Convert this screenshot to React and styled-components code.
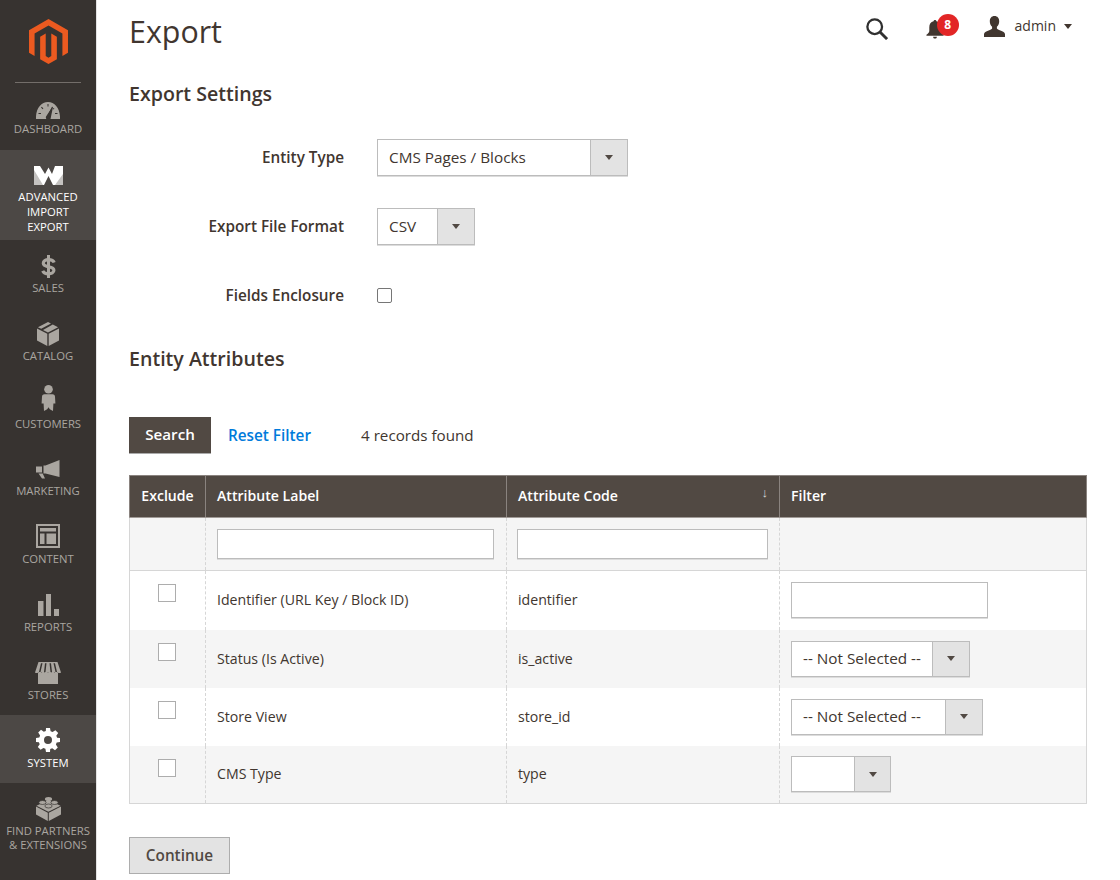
import React from "react";
import styled, { createGlobalStyle } from "styled-components";

const Global = createGlobalStyle`
  html, body { margin: 0; padding: 0; background: #fff; overflow: hidden; }
  body { font-family: "Open Sans", "Liberation Sans", sans-serif; color: #41362f; font-size: 14px; }
  * { box-sizing: border-box; }
`;

const Page = styled.div`
  display: flex;
  width: 1120px;
  height: 880px;
  overflow: hidden;
`;
const Sidebar = styled.nav`
  width: 97px;
  flex: none;
  height: 880px;
  background: #373330;
  border-right: 1px solid #e3e3e3;
  display: flex;
  flex-direction: column;
  overflow: hidden;
`;
const LogoBox = styled.div`
  height: 83px;
  margin: 0 15px;
  padding-top: 19px;
  border-bottom: 1px solid #736e6a;
  display: flex;
  justify-content: center;
  align-items: flex-start;
`;
const NavItem = styled.a`
  height: ${(p) => p.$h}px;
  flex: none;
  background: ${(p) => (p.$active ? "#4c4845" : "transparent")};
  color: ${(p) => (p.$active ? "#fff" : "#aaa6a0")};
  display: flex;
  flex-direction: column;
  align-items: center;
  padding-top: ${(p) => p.$pt}px;
  font-size: 11.3px;
  line-height: ${(p) => p.$lh || 14}px;
  text-align: center;
  text-transform: uppercase;
  white-space: nowrap;
`;
const NavIcon = styled.div`
  height: 24px;
  width: 40px;
  margin-bottom: ${(p) => p.$mb}px;
  display: flex;
  align-items: center;
  justify-content: center;
  color: ${(p) => (p.$active ? "#fff" : "#aaa6a0")};
`;
const Main = styled.main`
  flex: 1;
  min-width: 0;
  padding: 0 33px 0 32px;
`;
const Header = styled.header`
  height: 80px;
  display: flex;
  justify-content: space-between;
  align-items: flex-start;
`;
const Title = styled.h1`
  margin: 0;
  font-size: 30.4px;
  line-height: 64px;
  font-weight: 400;
  color: #41362f;
`;
const Actions = styled.div`
  display: flex;
  align-items: flex-start;
  margin-right: 15px;
  margin-top: 16px;
`;
const SearchWrap = styled.div`
  width: 22px;
  height: 22px;
  margin-top: 2px;
`;
const BellWrap = styled.div`
  position: relative;
  width: 18px;
  height: 19px;
  margin-left: 38px;
  margin-right: 40px;
  margin-top: 4px;
  color: #41362f;
`;
const Badge = styled.span`
  position: absolute;
  left: 11px;
  top: -6px;
  width: 22px;
  height: 22px;
  border-radius: 50%;
  background: #e22626;
  color: #fff;
  font-size: 12px;
  font-weight: 700;
  line-height: 22px;
  text-align: center;
`;
const UserName = styled.span`
  margin-left: 10px;
  font-size: 14px;
  line-height: 20px;
  color: #41362f;
`;
const UserCaret = styled.span`
  width: 0;
  height: 0;
  margin-left: 8px;
  margin-top: 8px;
  border-left: 4.5px solid transparent;
  border-right: 4.5px solid transparent;
  border-top: 5px solid #41362f;
`;
const SectionTitle = styled.h2`
  margin: 0;
  font-size: 19.6px;
  line-height: 28px;
  font-weight: 600;
  color: #41362f;
`;
const Form = styled.div`
  display: flex;
  flex-direction: column;
  margin-top: 31px;
  gap: 32px;
`;
const FormRow = styled.div`
  display: flex;
  align-items: center;
  height: 37px;
`;
const FormLabel = styled.label`
  width: 215px;
  margin-right: 33px;
  padding-bottom: 2px;
  text-align: right;
  font-size: 15.3px;
  font-weight: 600;
  color: #41362f;
`;
const SelectBox = styled.div`
  display: flex;
  width: ${(p) => p.$w}px;
  height: ${(p) => p.$h}px;
  background: #fff;
  border: 1px solid #bcbcbc;
  box-shadow: 0 1px 0 #dcdcdc;
  font-size: 15.3px;
  color: #41362f;
`;
const SelectValue = styled.div`
  flex: 1;
  min-width: 0;
  padding: 0 0 2px 11px;
  display: flex;
  align-items: center;
  white-space: nowrap;
  color: #41362f;
`;
const SelectArrow = styled.div`
  flex: none;
  width: ${(p) => p.$w}px;
  background: #e3e3e3;
  border-left: 1px solid #bcbcbc;
  display: flex;
  align-items: center;
  justify-content: center;
  &::after {
    content: "";
    width: 0;
    height: 0;
    border-left: 4.5px solid transparent;
    border-right: 4.5px solid transparent;
    border-top: 5px solid #514943;
  }
`;
const Checkbox = styled.span`
  display: block;
  width: ${(p) => p.$s}px;
  height: ${(p) => p.$s}px;
  background: #fff;
  border: 1px solid ${(p) => (p.$dark ? "#767676" : "#adadad")};
  border-radius: ${(p) => p.$r}px;
`;
const AttrTitle = styled(SectionTitle)`
  margin-top: 31px;
`;
const Toolbar = styled.div`
  display: flex;
  align-items: center;
  margin-top: 44px;
  height: 37px;
`;
const SearchButton = styled.button`
  width: 82px;
  height: 37px;
  padding: 0 0 2px;
  border: none;
  border-bottom: 1px solid #aaa;
  background: #514943;
  color: #fff;
  font-family: inherit;
  font-size: 15.2px;
  font-weight: 600;
`;
const ResetLink = styled.a`
  margin-left: 17px;
  padding-bottom: 2px;
  color: #007bdb;
  font-size: 15.3px;
  font-weight: 600;
`;
const Records = styled.span`
  margin-left: 50px;
  padding-bottom: 2px;
  font-size: 15.2px;
  color: #41362f;
`;
const Table = styled.table`
  width: 957px;
  margin-top: 21px;
  border-collapse: collapse;
  table-layout: fixed;
  font-size: 14.15px;
  border: 1px solid #d6d6d6;
  border-top: none;
`;
const Th = styled.th`
  height: 42px;
  padding: 0 11px 2px;
  background: #514943;
  color: #fff;
  text-align: left;
  font-weight: 600;
  font-size: 14.1px;
  border: 1px solid #8a837f;
  border-bottom-color: #a09a96;
  position: relative;
  white-space: nowrap;
  &:first-child { text-align: center; padding: 0 0 2px; }
`;
const SortArrow = styled.span`
  position: absolute;
  right: 11px;
  top: 7px;
  font-size: 13px;
  font-weight: 400;
  color: #d6d6d6;
`;
const Tr = styled.tr`
  background: ${(p) => (p.$alt ? "#f5f5f5" : "#fff")};
`;
const FilterTr = styled.tr`
  background: #f5f5f5;
  border-bottom: 1px solid #d6d6d6;
`;
const Td = styled.td`
  height: ${(p) => p.$h || 58}px;
  padding: 0 11px;
  color: #41362f;
  border-left: 1px dashed #d6d6d6;
  vertical-align: middle;
  &:first-child { border-left: none; }
`;
const LabelTd = styled(Td)`
  padding-bottom: 1px;
`;
const CheckTd = styled(Td)`
  vertical-align: top;
  padding: 13px 0 0 28px;
`;
const TextInput = styled.div`
  width: ${(p) => p.$w}px;
  height: ${(p) => p.$h}px;
  margin-left: ${(p) => p.$ml || 0}px;
  background: #fff;
  border: 1px solid #bcbcbc;
  box-shadow: 0 1px 0 #dcdcdc;
`;
const ContinueButton = styled.button`
  display: block;
  width: 101px;
  height: 37px;
  margin-top: 33px;
  padding: 0 0 2px;
  background: #e3e3e3;
  border: 1px solid #adadad;
  color: #514943;
  font-family: inherit;
  font-size: 15.3px;
  font-weight: 600;
`;

const Magento = () => (
  <svg width="39" height="45" viewBox="1.6 0 20.8 24">
    <path fill="#ec5a20" d="M12 24l-4.455-2.572v-12l2.97-1.715v12.001l1.485.902 1.485-.902V7.713l2.971 1.715v12L12 24zM22.391 6v12l-2.969 1.714V7.713L12 3.43 4.574 7.713v12L1.609 18V6L12 0l10.391 6z" />
  </svg>
);
const Gauge = () => (
  <svg width="24" height="17" viewBox="0 0 24 17">
    <path fill="currentColor" d="M0 17C-.5 7 5 0 12 0s12.500 7 12 17H14.500L17 5l-1-.2L11 14.500c-.8 1-.9 1.700-.6 2.500H0z" />
    <path fill="#373330" d="M11.500 2h1v2.500h-1zM5 5.500l.8-.7 1.600 1.800-.8.700zM2.500 11h2.500v1H2.500zM19 11h2.500v1H19zM17.600 6l.8.700-.8.800-.8-.7z" />
    <path fill="#373330" d="M16 5.500l-5.800 8.700c-.6 1-.5 2 .4 2.500h2.600c.8-.4 1-1.200 1.100-2z" />
  </svg>
);
const WLogo = () => (
  <svg width="29" height="19" viewBox="0 0 29 19">
    <path fill="#fff" d="M0 0h6l5 8 3.500-6.500L18 8l3-8h8v19H19l-4.500-9L10 19H0z" />
    <path fill="#c4c2c0" d="M0 4l9 15H0z" />
    <path fill="#c4c2c0" d="M29 8v11h-8z" />
  </svg>
);
const Dollar = () => (
  <svg width="15" height="23" viewBox="0 0 15 23">
    <path fill="none" stroke="currentColor" strokeWidth="3.200" d="M13.200 7.500C12.400 5.500 10.200 4.700 7.500 4.700 4.500 4.700 2.300 6 2.300 8.300c0 5.200 10.600 1.800 10.600 7 0 2.200-2.400 3.500-5.400 3.500-2.700 0-4.900-1-5.800-3" />
    <path fill="currentColor" d="M6 0h3v23H6z" />
  </svg>
);
const Box = () => (
  <svg width="22" height="24" viewBox="0 0 22 24">
    <path fill="currentColor" d="M0 6.500l10.300 5.300V24L0 18.500zM22 6.500l-10.300 5.300V24L22 18.500z" />
    <path fill="currentColor" d="M11 0l3 1.500-9.800 5.200L0.900 5.200zM15.800 2.400l5.300 2.800L11 10.500 6 8z" />
  </svg>
);
const Person = () => (
  <svg width="15" height="27" viewBox="0 0 15 27">
    <circle cx="7.500" cy="4.300" r="4.300" fill="currentColor" />
    <path fill="currentColor" d="M3.500 9.200h8c1.600 0 2.500 1 2.500 2.500l.4 6.800h-2L12 26l-3.200-1.800-1.300-2-1.300 2L3 26l-.4-7.500h-2l.4-6.800c0-1.500.9-2.500 2.500-2.500z" />
  </svg>
);
const Megaphone = () => (
  <svg width="24" height="19" viewBox="0 0 24 19">
    <path fill="currentColor" d="M23.500 0v17L9.500 13.500h-2v-8h2zM0 6.500h6v6H0zM2.500 13.500h4.200l2.300 5H6z" />
  </svg>
);
const ContentIcon = () => (
  <svg width="24" height="24" viewBox="0 0 24 24">
    <path fill="currentColor" fillRule="evenodd" d="M0 0h24v24H0zM2 2v20h20V2z" />
    <path fill="currentColor" d="M4 4h16v3.500H4zM4 9.500h4.500V20H4zM10.500 9.500H20V20h-9.500z" />
  </svg>
);
const Bars = () => (
  <svg width="21" height="22" viewBox="0 0 21 22">
    <path fill="currentColor" d="M0 7h5.500v15H0zM8 0h5v22H8zM16 15h5v7h-5z" />
  </svg>
);
const Store = () => (
  <svg width="26" height="22" viewBox="0 0 26 22">
    <path fill="currentColor" d="M3 11h20v11H3z" />
    <path fill="currentColor" d="M3.500 0h19L26 10.500c-.8.800-2.400.8-3.200 0-.8.800-2.500.8-3.300 0-.8.800-2.500.8-3.200 0-.8.800-2.500.8-3.300 0-.8.800-2.500.8-3.300 0-.8.800-2.400.8-3.200 0-.8.800-2.500.8-3.300 0-.8.800-2.400.8-3.200 0z" />
    <path fill="#373330" d="M6 1.200h1.500L5.500 10H4zM10 1.200h1.500L10.500 10H9zM14.500 1.200H16l1 8.800h-1.500zM18.500 1.200H20l2 8.800h-1.500z" />
  </svg>
);
const Gear = () => (
  <svg width="24" height="24" viewBox="0 0 24 24">
    <path fill="currentColor" fillRule="evenodd" d="M10 0h4l.6 3.300 2 .8 2.800-1.900 2.800 2.800-1.900 2.800.8 2L24 10v4l-3.300.6-.8 2 1.900 2.800-2.800 2.800-2.800-1.900-2 .8L14 24h-4l-.6-3.300-2-.8-2.800 1.900-2.800-2.800 1.900-2.800-.8-2L0 14v-4l3.300-.6.8-2-1.900-2.800 2.800-2.800 2.800 1.900 2-.8zM12 8a4 4 0 1 0 0 8 4 4 0 0 0 0-8z" />
  </svg>
);
const Brick = () => (
  <svg width="25" height="25" viewBox="0 0 25 25">
    <path fill="currentColor" d="M0 10.500l11.800 6.300V25L0 18.500zM25 10.500l-12.200 6.300V25L25 18.500z" />
    <path fill="currentColor" d="M12.400 4L24.500 9.800 12.400 15.800.5 9.800z" />
    <ellipse cx="12.500" cy="3" rx="3.600" ry="2" fill="currentColor" />
    <ellipse cx="6.500" cy="6.500" rx="3.600" ry="2" fill="currentColor" stroke="#373330" strokeWidth=".7" />
    <ellipse cx="18.500" cy="6.500" rx="3.600" ry="2" fill="currentColor" stroke="#373330" strokeWidth=".7" />
    <ellipse cx="12.500" cy="10" rx="3.600" ry="2" fill="currentColor" stroke="#373330" strokeWidth=".7" />
  </svg>
);
const SearchIcon = () => (
  <svg width="22" height="22" viewBox="0 0 24 24" fill="none" stroke="#303030" strokeWidth="2.500">
    <circle cx="9.500" cy="9.500" r="8" />
    <path d="M15 15l8 8" strokeWidth="3.200" />
  </svg>
);
const Bell = () => (
  <svg width="18" height="19" viewBox="0 0 18 20">
    <path fill="currentColor" d="M9 0c.9 0 1.500.6 1.500 1.400C13.500 2 15 4.500 15 7.500v4c0 1.500 1.500 3 3 4v1H0v-1c1.500-1 3-2.500 3-4v-4c0-3 1.500-5.500 4.500-6.100C7.500.6 8.100 0 9 0zM7 17.500h4c0 1.200-.9 2-2 2s-2-.8-2-2z" />
  </svg>
);
const UserIcon = () => (
  <svg width="21" height="21" viewBox="0 0 21 21">
    <path fill="#41362f" d="M10.500 0c3 0 4.700 2.200 4.700 5.200 0 2.200-.9 4.400-2.300 5.500v1.800c.4.800 1.600 1.200 3.500 1.900 2.500.9 4.600 1.800 4.600 3.900V21H0v-2.700c0-2.100 2.100-3 4.600-3.900 1.900-.7 3.100-1.100 3.500-1.900v-1.800C6.700 9.600 5.800 7.400 5.800 5.200 5.800 2.200 7.500 0 10.500 0z" />
  </svg>
);

const Select = ({ w, h = 36, arrow = 37, children }) => (
  <SelectBox $w={w} $h={h}>
    <SelectValue>{children}</SelectValue>
    <SelectArrow $w={arrow} />
  </SelectBox>
);

const navItems = [
  { label: ["Dashboard"], icon: <Gauge />, h: 67, pt: 15, mb: 0 },
  { label: ["Advanced", "Import", "Export"], icon: <WLogo />, h: 90, pt: 13, mb: 2, lh: 15, active: true },
  { label: ["Sales"], icon: <Dollar />, h: 68, pt: 14, mb: 3 },
  { label: ["Catalog"], icon: <Box />, h: 68, pt: 14, mb: 3 },
  { label: ["Customers"], icon: <Person />, h: 68, pt: 10, mb: 7 },
  { label: ["Marketing"], icon: <Megaphone />, h: 67, pt: 13, mb: 3 },
  { label: ["Content"], icon: <ContentIcon />, h: 68, pt: 13, mb: 4 },
  { label: ["Reports"], icon: <Bars />, h: 68, pt: 14, mb: 3 },
  { label: ["Stores"], icon: <Store />, h: 68, pt: 14, mb: 3 },
  { label: ["System"], icon: <Gear />, h: 68, pt: 13, mb: 4, active: true },
  { label: ["Find Partners", "& Extensions"], icon: <Brick />, h: 97, pt: 13, mb: 4 },
];

const rows = [
  { label: "Identifier (URL Key / Block ID)", code: "identifier", h: 59, filter: <TextInput $w={197} $h={36} /> },
  { label: "Status (Is Active)", code: "is_active", h: 58, alt: true, filter: <Select w={179} h={36}>-- Not Selected --</Select> },
  { label: "Store View", code: "store_id", h: 58, filter: <Select w={192} h={36}>-- Not Selected --</Select> },
  { label: "CMS Type", code: "type", h: 58, alt: true, filter: <Select w={100} h={36} arrow={36} /> },
];

export default function App() {
  return (
    <Page>
      <Global />
      <Sidebar>
        <LogoBox><Magento /></LogoBox>
        {navItems.map((n) => (
          <NavItem key={n.label[0]} $h={n.h} $pt={n.pt} $lh={n.lh} $active={n.active}>
            <NavIcon $mb={n.mb} $active={n.active}>{n.icon}</NavIcon>
            {n.label.map((l) => <span key={l}>{l}</span>)}
          </NavItem>
        ))}
      </Sidebar>
      <Main>
        <Header>
          <Title>Export</Title>
          <Actions>
            <SearchWrap><SearchIcon /></SearchWrap>
            <BellWrap><Bell /><Badge>8</Badge></BellWrap>
            <UserIcon />
            <UserName>admin</UserName>
            <UserCaret />
          </Actions>
        </Header>
        <SectionTitle>Export Settings</SectionTitle>
        <Form>
          <FormRow>
            <FormLabel>Entity Type</FormLabel>
            <Select w={251} h={37}>CMS Pages / Blocks</Select>
          </FormRow>
          <FormRow>
            <FormLabel>Export File Format</FormLabel>
            <Select w={98} h={37}>CSV</Select>
          </FormRow>
          <FormRow>
            <FormLabel>Fields Enclosure</FormLabel>
            <Checkbox $s={15} $r={2} $dark />
          </FormRow>
        </Form>
        <AttrTitle>Entity Attributes</AttrTitle>
        <Toolbar>
          <SearchButton>Search</SearchButton>
          <ResetLink>Reset Filter</ResetLink>
          <Records>4 records found</Records>
        </Toolbar>
        <Table>
          <colgroup>
            <col style={{ width: 76 }} />
            <col style={{ width: 301 }} />
            <col style={{ width: 273 }} />
            <col style={{ width: 307 }} />
          </colgroup>
          <thead>
            <tr>
              <Th>Exclude</Th>
              <Th>Attribute Label</Th>
              <Th>Attribute Code<SortArrow>↓</SortArrow></Th>
              <Th>Filter</Th>
            </tr>
          </thead>
          <tbody>
            <FilterTr>
              <Td $h={53} />
              <Td $h={53}><TextInput $w={277} $h={30} /></Td>
              <Td $h={53}><TextInput $w={251} $h={30} $ml={-1} /></Td>
              <Td $h={53} />
            </FilterTr>
            {rows.map((r) => (
              <Tr key={r.code} $alt={r.alt}>
                <CheckTd $h={r.h}><Checkbox $s={18} $r={0} /></CheckTd>
                <LabelTd $h={r.h}>{r.label}</LabelTd>
                <LabelTd $h={r.h}>{r.code}</LabelTd>
                <Td $h={r.h}>{r.filter}</Td>
              </Tr>
            ))}
          </tbody>
        </Table>
        <ContinueButton>Continue</ContinueButton>
      </Main>
    </Page>
  );
}
